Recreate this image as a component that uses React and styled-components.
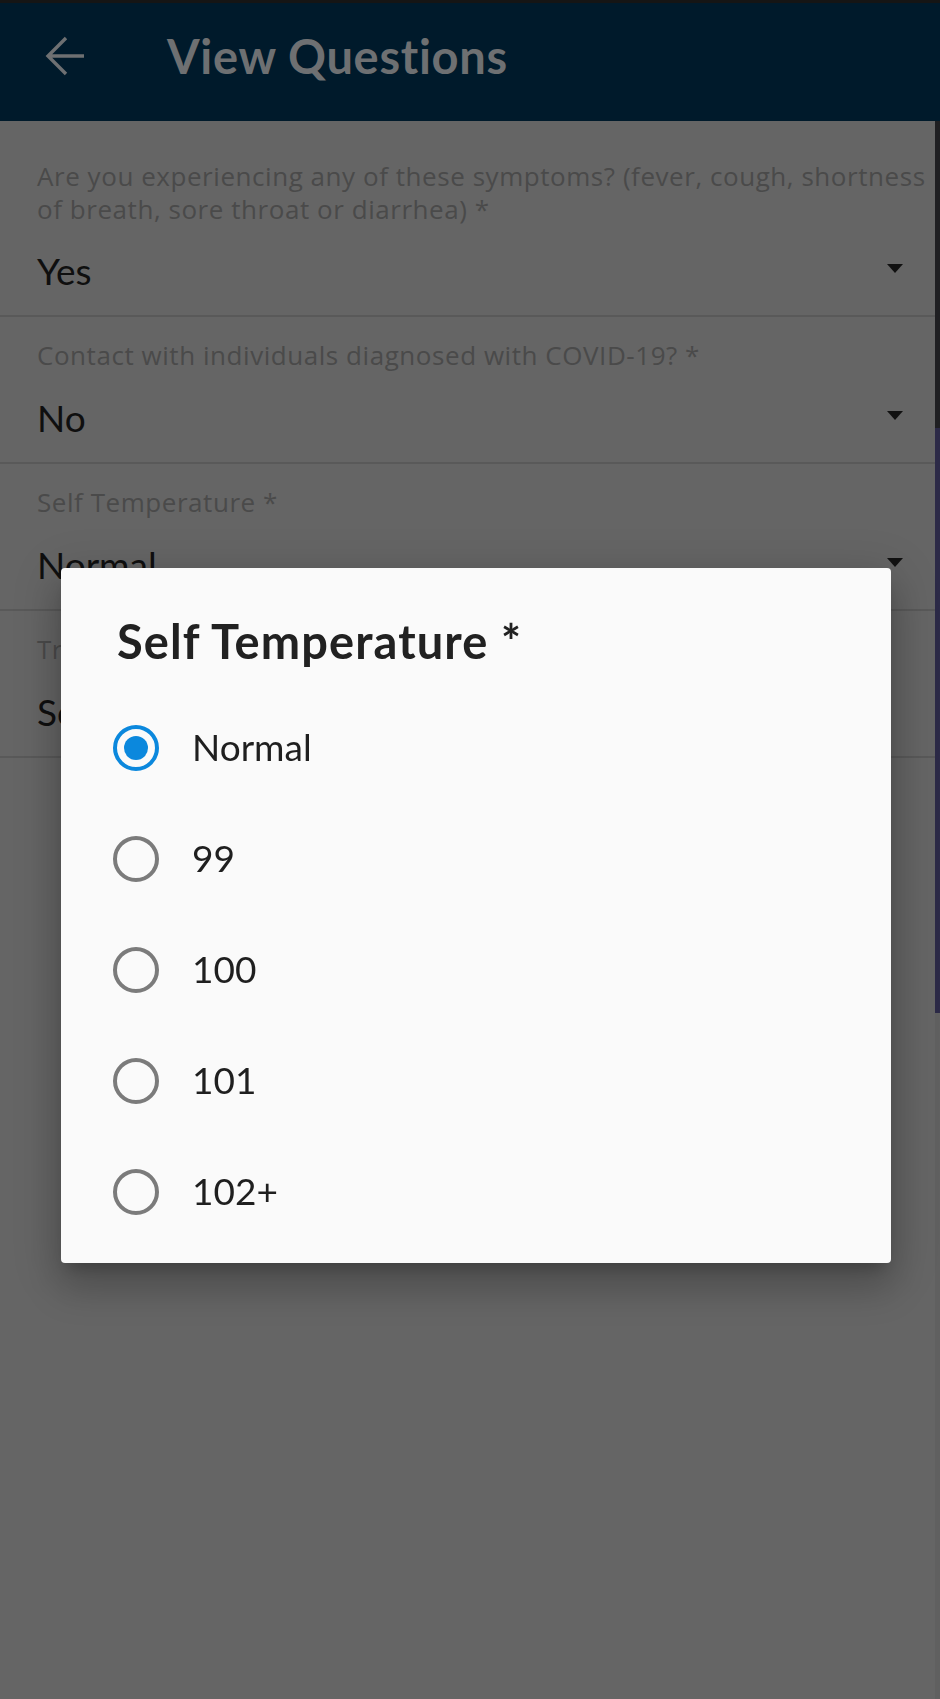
import React from "react";
import styled, { createGlobalStyle } from "styled-components";

const GlobalStyle = createGlobalStyle`
  html, body {
    margin: 0;
    padding: 0;
    background: #656565;
    font-family: Lato, "Open Sans", "Noto Sans", sans-serif;
  }
  * { box-sizing: border-box; }
`;

const Screen = styled.div`
  width: 940px;
  min-height: 1699px;
  background: #656565;
  display: flex;
  flex-direction: column;
`;

const AppBar = styled.header`
  height: 121px;
  border-top: 3px solid #151515;
  background: #001a2b;
  display: flex;
  align-items: center;
  padding: 0 0 12px 45px;
  gap: 81px;
`;

const BackIcon = styled.svg`
  width: 41px;
  height: 40px;
  flex: none;
`;

const Title = styled.h1`
  margin: 0;
  font-size: 47px;
  font-weight: 700;
  letter-spacing: 0.7px;
  color: #6e7072;
  line-height: 1;
`;

const Body = styled.div`
  flex: 1;
  display: flex;
`;

const QuestionList = styled.div`
  flex: 1;
  padding-top: 17px;
`;

const QuestionRow = styled.div`
  padding: 22px 2px 19px 37px;
  border-bottom: 2px solid #595959;
`;

const QuestionLabel = styled.div`
  font-family: "Open Sans", Lato, sans-serif;
  font-size: 26px;
  line-height: 33px;
  letter-spacing: 0.55px;
  color: #4a4a4a;
`;

const ValueRow = styled.div`
  margin-top: ${(p) => p.$gap}px;
  display: flex;
  align-items: center;
  justify-content: space-between;
  height: 50px;
  padding-right: 30px;
`;

const Value = styled.div`
  font-size: 37px;
  line-height: 50px;
  color: #0f0f0f;
`;

const Caret = styled.span`
  width: 0;
  height: 0;
  border-left: 8px solid transparent;
  border-right: 8px solid transparent;
  border-top: 9px solid #111;
  margin-bottom: 6px;
`;

const EdgeStrip = styled.div`
  width: 5px;
  display: flex;
  flex-direction: column;
`;

const EdgeSegment = styled.div`
  height: ${(p) => p.$h}px;
  background: ${(p) => p.$color};
  flex: ${(p) => (p.$fill ? 1 : "none")};
`;

const Dialog = styled.div`
  position: fixed;
  left: 61px;
  top: 568px;
  width: 830px;
  height: 695px;
  background: #fafafa;
  border-radius: 4px;
  padding: 43px 0 16px 52px;
  box-shadow: 0 11px 15px -7px rgba(0, 0, 0, 0.22),
    0 24px 38px 3px rgba(0, 0, 0, 0.16),
    0 9px 46px 8px rgba(0, 0, 0, 0.12);
  display: flex;
  flex-direction: column;
`;

const DialogTitle = styled.h2`
  margin: 0 0 21px 4px;
  font-size: 47px;
  line-height: 60px;
  font-weight: 700;
  letter-spacing: 1.1px;
  color: #212121;
`;

const Option = styled.label`
  height: 111px;
  display: flex;
  align-items: center;
  gap: 33px;
  cursor: pointer;
`;

const RadioRing = styled.span`
  width: 46px;
  height: 46px;
  border-radius: 50%;
  border: 4.5px solid ${(p) => (p.$checked ? "#0b88dd" : "#7b7b7b")};
  display: flex;
  align-items: center;
  justify-content: center;
  flex: none;
`;

const RadioDot = styled.span`
  width: 24px;
  height: 24px;
  border-radius: 50%;
  background: #0b88dd;
`;

const OptionText = styled.span`
  font-size: 37px;
  color: #1f1f1f;
  line-height: 1.2;
`;

const questions = [
  {
    label:
      "Are you experiencing any of these symptoms? (fever, cough, shortness of breath, sore throat or diarrhea) *",
    value: "Yes",
    dropdown: true,
    gap: 20,
  },
  {
    label: "Contact with individuals diagnosed with COVID-19? *",
    value: "No",
    dropdown: true,
    gap: 21,
  },
  { label: "Self Temperature *", value: "Normal", dropdown: true, gap: 21 },
  { label: "Travel History *", value: "Select", dropdown: false, gap: 21 },
];

const options = ["Normal", "99", "100", "101", "102+"];

export default function App() {
  return (
    <>
      <GlobalStyle />
      <Screen>
        <AppBar>
          <BackIcon viewBox="0 0 41 40" fill="none">
            <path
              d="M39 20H3M21 2L3 20L21 38"
              stroke="#6e7072"
              strokeWidth="3.4"
            />
          </BackIcon>
          <Title>View Questions</Title>
        </AppBar>
        <Body>
          <QuestionList>
            {questions.map((q) => (
              <QuestionRow key={q.label}>
                <QuestionLabel>{q.label}</QuestionLabel>
                <ValueRow $gap={q.gap}>
                  <Value>{q.value}</Value>
                  {q.dropdown && <Caret />}
                </ValueRow>
              </QuestionRow>
            ))}
          </QuestionList>
          <EdgeStrip>
            <EdgeSegment $h={307} $color="#1f1f22" />
            <EdgeSegment $h={585} $color="#2c2a47" />
            <EdgeSegment $fill $color="#606060" />
          </EdgeStrip>
        </Body>
        <Dialog role="dialog">
          <DialogTitle>Self Temperature *</DialogTitle>
          {options.map((o, i) => (
            <Option key={o}>
              <RadioRing $checked={i === 0}>{i === 0 && <RadioDot />}</RadioRing>
              <OptionText>{o}</OptionText>
            </Option>
          ))}
        </Dialog>
      </Screen>
    </>
  );
}
